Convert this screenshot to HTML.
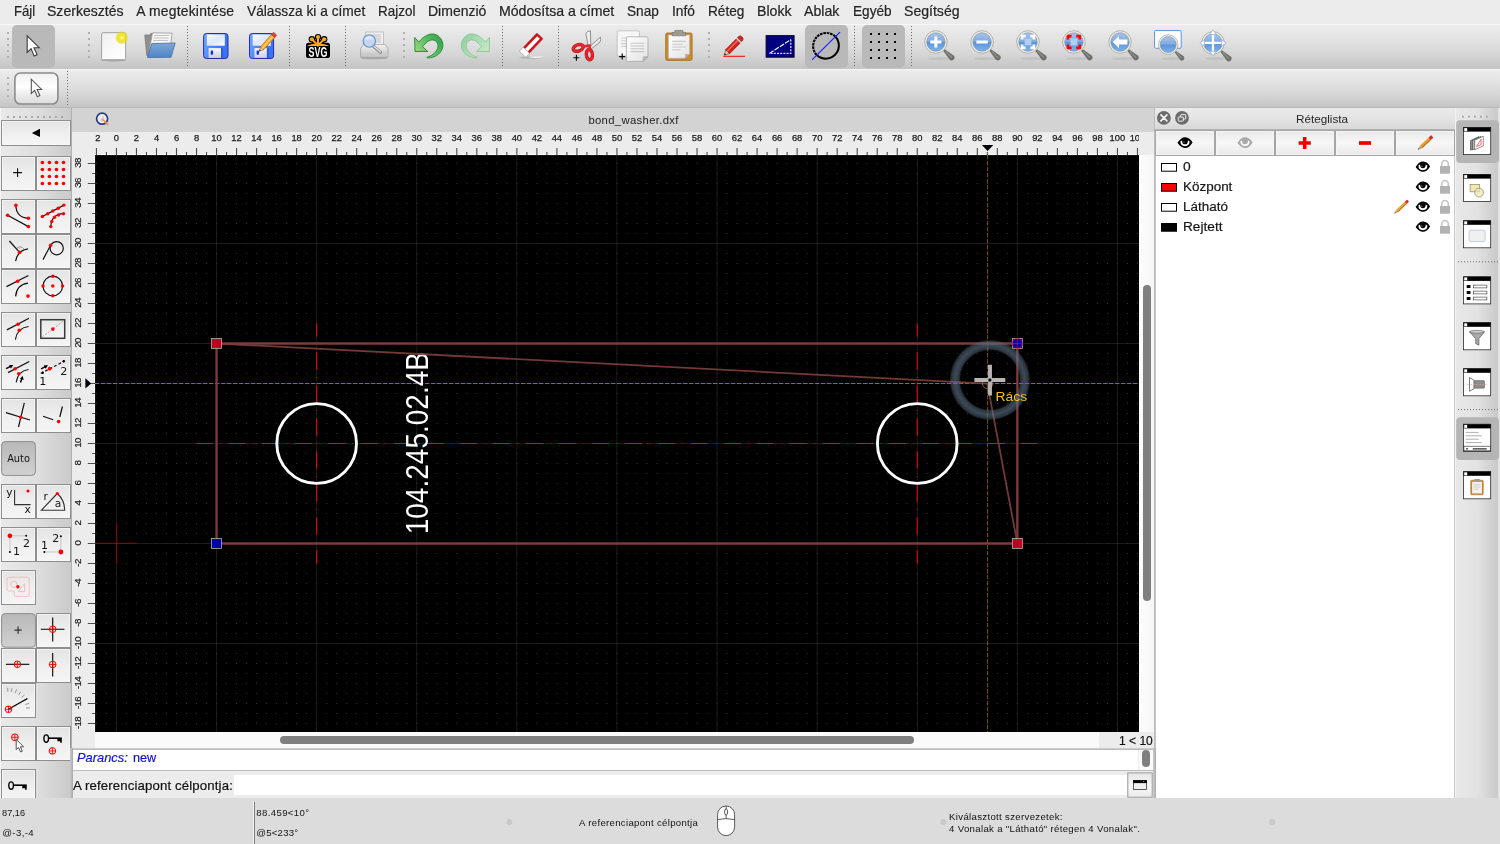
<!DOCTYPE html>
<html lang="hu"><head><meta charset="utf-8"><title>bond_washer.dxf</title>
<style>
*{box-sizing:border-box;margin:0;padding:0}
html,body{width:1500px;height:844px;overflow:hidden;background:#ececec;font-family:"Liberation Sans",sans-serif;color:#000}
.abs{position:absolute}
#root{position:relative;width:1500px;height:844px;overflow:hidden;background:#ececec;will-change:transform}
.t{position:absolute;white-space:nowrap;line-height:1;transform-origin:0 50%}
#menubar{left:0;top:0;width:1500px;height:23px;background:#ececec}
#tb1{left:0;top:24px;width:1500px;height:45px;background:linear-gradient(#ececec,#e4e4e4 28%,#d8d8d8 62%,#c4c4c4);border-top:1px solid #f7f7f7}
#tb2{left:0;top:69px;width:1500px;height:38px;background:linear-gradient(#ececec,#e4e4e4 28%,#d8d8d8 62%,#c5c5c5);border-top:1px solid #f7f7f7}
#tbsep{left:0;top:107px;width:1500px;height:1px;background:#b9b9b9}
#leftbox{left:0;top:108px;width:71px;height:690px;background:linear-gradient(90deg,#f5f5f5 0,#f5f5f5 1px,#e9e9e9 1px,#dfdfdf 50%,#cacaca)}
#rightbar{left:1455px;top:108px;width:45px;height:690px;background:linear-gradient(90deg,#f2f2f2 0,#f2f2f2 1px,#e8e8e8 1px,#e2e2e2 50%,#c8c8c8 43.5px,#e4e4e4 43.5px)}
#status{left:0;top:798px;width:1500px;height:46px;background:#dcdcdc}
.lb{position:absolute;width:34px;height:34px;background:linear-gradient(#fdfdfd,#f1f1f1 50%,#e6e6e6);border:1px solid #b4b4b4;border-top-color:#c6c6c6;border-left-color:#c0c0c0}
.lb.on{background:#c4c4c4;border:1px solid #b0b0b0;border-radius:5px}
.lb svg{position:absolute;left:-1px;top:-1px}
</style></head>
<body><div id="root">
<div class="abs" id="menubar"></div>
<span class="t" style="left:13.80px;top:2.86px;font-size:13.9px;height:16.68px;line-height:16.68px;color:#242424;-webkit-text-stroke:0.2px;transform:scaleX(0.9465);">Fájl</span>
<span class="t" style="left:47.00px;top:2.86px;font-size:13.9px;height:16.68px;line-height:16.68px;color:#242424;-webkit-text-stroke:0.2px;transform:scaleX(1.0118);">Szerkesztés</span>
<span class="t" style="left:136.20px;top:2.86px;font-size:13.9px;height:16.68px;line-height:16.68px;color:#242424;-webkit-text-stroke:0.2px;letter-spacing:0.220px;">A megtekintése</span>
<span class="t" style="left:247.00px;top:2.86px;font-size:13.9px;height:16.68px;line-height:16.68px;color:#242424;-webkit-text-stroke:0.2px;transform:scaleX(0.9880);">Válassza ki a címet</span>
<span class="t" style="left:378.20px;top:2.86px;font-size:13.9px;height:16.68px;line-height:16.68px;color:#242424;-webkit-text-stroke:0.2px;transform:scaleX(0.9682);">Rajzol</span>
<span class="t" style="left:428.20px;top:2.86px;font-size:13.9px;height:16.68px;line-height:16.68px;color:#242424;-webkit-text-stroke:0.2px;transform:scaleX(1.0080);">Dimenzió</span>
<span class="t" style="left:499.20px;top:2.86px;font-size:13.9px;height:16.68px;line-height:16.68px;color:#242424;-webkit-text-stroke:0.2px;transform:scaleX(1.0153);">Módosítsa a címet</span>
<span class="t" style="left:627.20px;top:2.86px;font-size:13.9px;height:16.68px;line-height:16.68px;color:#242424;-webkit-text-stroke:0.2px;transform:scaleX(0.9826);">Snap</span>
<span class="t" style="left:672.30px;top:2.86px;font-size:13.9px;height:16.68px;line-height:16.68px;color:#242424;-webkit-text-stroke:0.2px;transform:scaleX(0.9921);">Infó</span>
<span class="t" style="left:708.00px;top:2.86px;font-size:13.9px;height:16.68px;line-height:16.68px;color:#242424;-webkit-text-stroke:0.2px;transform:scaleX(0.9813);">Réteg</span>
<span class="t" style="left:757.10px;top:2.86px;font-size:13.9px;height:16.68px;line-height:16.68px;color:#242424;-webkit-text-stroke:0.2px;transform:scaleX(1.0179);">Blokk</span>
<span class="t" style="left:804.40px;top:2.86px;font-size:13.9px;height:16.68px;line-height:16.68px;color:#242424;-webkit-text-stroke:0.2px;transform:scaleX(1.0181);">Ablak</span>
<span class="t" style="left:852.50px;top:2.86px;font-size:13.9px;height:16.68px;line-height:16.68px;color:#242424;-webkit-text-stroke:0.2px;transform:scaleX(0.9794);">Egyéb</span>
<span class="t" style="left:904.20px;top:2.86px;font-size:13.9px;height:16.68px;line-height:16.68px;color:#242424;-webkit-text-stroke:0.2px;transform:scaleX(1.0134);">Segítség</span>
<div class="abs" id="tb1"></div><div class="abs" id="tb2"></div><div class="abs" id="tbsep"></div>
<div class="abs" style="left:12px;top:25px;width:43px;height:43px;background:#b9b9b9;border-radius:5px"></div>
<div class="abs" style="left:805px;top:25px;width:43px;height:43px;background:#b9b9b9;border-radius:5px"></div>
<div class="abs" style="left:862px;top:25px;width:43px;height:43px;background:#b9b9b9;border-radius:5px"></div>
<div class="abs" style="left:7px;top:32px;width:2px;height:2px;background:#b1b1b1"></div><div class="abs" style="left:7px;top:38px;width:2px;height:2px;background:#b1b1b1"></div><div class="abs" style="left:7px;top:44px;width:2px;height:2px;background:#b1b1b1"></div><div class="abs" style="left:7px;top:50px;width:2px;height:2px;background:#b1b1b1"></div><div class="abs" style="left:7px;top:56px;width:2px;height:2px;background:#b1b1b1"></div>
<div class="abs" style="left:88px;top:32px;width:2px;height:2px;background:#b1b1b1"></div><div class="abs" style="left:88px;top:38px;width:2px;height:2px;background:#b1b1b1"></div><div class="abs" style="left:88px;top:44px;width:2px;height:2px;background:#b1b1b1"></div><div class="abs" style="left:88px;top:50px;width:2px;height:2px;background:#b1b1b1"></div><div class="abs" style="left:88px;top:56px;width:2px;height:2px;background:#b1b1b1"></div>
<div class="abs" style="left:403px;top:32px;width:2px;height:2px;background:#b1b1b1"></div><div class="abs" style="left:403px;top:38px;width:2px;height:2px;background:#b1b1b1"></div><div class="abs" style="left:403px;top:44px;width:2px;height:2px;background:#b1b1b1"></div><div class="abs" style="left:403px;top:50px;width:2px;height:2px;background:#b1b1b1"></div><div class="abs" style="left:403px;top:56px;width:2px;height:2px;background:#b1b1b1"></div>
<div class="abs" style="left:708px;top:32px;width:2px;height:2px;background:#b1b1b1"></div><div class="abs" style="left:708px;top:38px;width:2px;height:2px;background:#b1b1b1"></div><div class="abs" style="left:708px;top:44px;width:2px;height:2px;background:#b1b1b1"></div><div class="abs" style="left:708px;top:50px;width:2px;height:2px;background:#b1b1b1"></div><div class="abs" style="left:708px;top:56px;width:2px;height:2px;background:#b1b1b1"></div>
<div class="abs" style="left:7px;top:77px;width:2px;height:2px;background:#b1b1b1"></div><div class="abs" style="left:7px;top:83px;width:2px;height:2px;background:#b1b1b1"></div><div class="abs" style="left:7px;top:89px;width:2px;height:2px;background:#b1b1b1"></div><div class="abs" style="left:7px;top:95px;width:2px;height:2px;background:#b1b1b1"></div>
<div class="abs" style="left:187px;top:26px;width:1px;height:40px;background:repeating-linear-gradient(#6a6a6a 0 1px,transparent 1px 3px)"></div>
<div class="abs" style="left:289px;top:26px;width:1px;height:40px;background:repeating-linear-gradient(#6a6a6a 0 1px,transparent 1px 3px)"></div>
<div class="abs" style="left:345px;top:26px;width:1px;height:40px;background:repeating-linear-gradient(#6a6a6a 0 1px,transparent 1px 3px)"></div>
<div class="abs" style="left:502px;top:26px;width:1px;height:40px;background:repeating-linear-gradient(#6a6a6a 0 1px,transparent 1px 3px)"></div>
<div class="abs" style="left:558px;top:26px;width:1px;height:40px;background:repeating-linear-gradient(#6a6a6a 0 1px,transparent 1px 3px)"></div>
<div class="abs" style="left:854px;top:26px;width:1px;height:40px;background:repeating-linear-gradient(#6a6a6a 0 1px,transparent 1px 3px)"></div>
<div class="abs" style="left:911px;top:26px;width:1px;height:40px;background:repeating-linear-gradient(#6a6a6a 0 1px,transparent 1px 3px)"></div>
<div class="abs" style="left:67px;top:71px;width:1px;height:36px;background:repeating-linear-gradient(#6a6a6a 0 1px,transparent 1px 3px)"></div>
<svg class="abs" style="left:10px;top:70px" width="54" height="38" viewBox="10 70 54 38"><defs><linearGradient id="gT2" x1="0" y1="0" x2="0" y2="1"><stop offset="0" stop-color="#f0f0f0"/><stop offset="0.45" stop-color="#ffffff"/><stop offset="0.7" stop-color="#ececec"/><stop offset="1" stop-color="#dcdcdc"/></linearGradient></defs><rect x="14.9" y="73" width="43" height="31" rx="5.5" fill="url(#gT2)" stroke="#8c8c8c" stroke-width="1.6"/></svg>
<svg class="abs" style="left:0;top:23px" width="1500" height="85" viewBox="0 23 1500 85">
<defs>
<linearGradient id="gPaper" x1="0" y1="0" x2="1" y2="1"><stop offset="0" stop-color="#eeeeee"/><stop offset="0.6" stop-color="#fbfbfb"/><stop offset="1" stop-color="#ffffff"/></linearGradient>
<radialGradient id="gGlow"><stop offset="0" stop-color="#ffffc0"/><stop offset="0.35" stop-color="#f2ea20"/><stop offset="0.7" stop-color="#e8dc10" stop-opacity="0.75"/><stop offset="1" stop-color="#e8dc10" stop-opacity="0"/></radialGradient>
<linearGradient id="gFold" x1="0" y1="0" x2="0" y2="1"><stop offset="0" stop-color="#7fa7d8"/><stop offset="1" stop-color="#4f84c4"/></linearGradient>
<linearGradient id="gSave" x1="0" y1="0" x2="1" y2="0.3"><stop offset="0" stop-color="#74acff"/><stop offset="0.5" stop-color="#4a86fa"/><stop offset="1" stop-color="#3a72f2"/></linearGradient><linearGradient id="gShut" x1="0" y1="0" x2="0" y2="1"><stop offset="0" stop-color="#f6f6fa"/><stop offset="1" stop-color="#cfd0dc"/></linearGradient>
<linearGradient id="gLabel" x1="0" y1="0" x2="1" y2="1"><stop offset="0" stop-color="#ffffff"/><stop offset="0.5" stop-color="#dfe6fb"/><stop offset="1" stop-color="#ffffff"/></linearGradient>
<linearGradient id="gUndo" x1="1" y1="0" x2="0" y2="0.6"><stop offset="0" stop-color="#2a9a48"/><stop offset="0.5" stop-color="#5bbb60"/><stop offset="1" stop-color="#93d67c"/></linearGradient>
<linearGradient id="gRedo" x1="1" y1="0" x2="0" y2="0.6"><stop offset="0" stop-color="#90cba0"/><stop offset="0.5" stop-color="#aadcae"/><stop offset="1" stop-color="#c8e9c2"/></linearGradient>
<linearGradient id="gLens" x1="0" y1="0" x2="0" y2="1"><stop offset="0" stop-color="#a9c5ea"/><stop offset="0.48" stop-color="#7fa9e0"/><stop offset="0.52" stop-color="#5a93db"/><stop offset="1" stop-color="#7db4ee"/></linearGradient>
<linearGradient id="gPrn" x1="0" y1="0" x2="0" y2="1"><stop offset="0" stop-color="#f4f4f4"/><stop offset="1" stop-color="#bdbdbd"/></linearGradient>
<linearGradient id="gClip" x1="0" y1="0" x2="1" y2="1"><stop offset="0" stop-color="#ffffff"/><stop offset="1" stop-color="#e2e2e2"/></linearGradient>
</defs>
<path d="M27.20 35.80 L27.20 52.40 L31.10 48.80 L34.20 56.10 L37.10 54.80 L34.00 47.70 L39.20 47.70Z" fill="#fff" stroke="#3d3d3d" stroke-width="1.1" stroke-linejoin="miter"/>
<path d="M31.30 79.20 L31.30 93.48 L34.65 90.38 L37.32 96.66 L39.81 95.54 L37.15 89.43 L41.62 89.43Z" fill="#fff" stroke="#555" stroke-width="1.1" stroke-linejoin="miter"/>
<ellipse cx="113.5" cy="60.2" rx="12.5" ry="1.2" fill="#8a8a8a" opacity="0.6"/>
<rect x="101.6" y="32.7" width="24" height="27" rx="1.2" fill="url(#gPaper)" stroke="#9c9c9c" stroke-width="0.9"/>
<circle cx="121.8" cy="37.8" r="7" fill="url(#gGlow)"/>
<path d="M144.8 35 h5 l1 -1.5 h8 v22 h-12 z" fill="#8f8f8f" stroke="#6f6f6f" stroke-width="0.7"/>
<path d="M152.5 32.8 l19.5 0.3 -1.8 16 -21.5 4 z" fill="#f4f4f4" stroke="#8d8d8d" stroke-width="0.7"/>
<path d="M154 35.5 h15 M153.6 38 h15 M153.2 40.5 h15" stroke="#c4c4c4" stroke-width="1"/>
<path d="M151.8 43.6 l23.4 -0.6 -4.2 14.3 -23.6 0.2 z" fill="url(#gFold)" stroke="#416fa8" stroke-width="0.8"/>
<rect x="203.6" y="33.5" width="24.4" height="25" rx="2.8" fill="url(#gSave)" stroke="#2a2cae" stroke-width="1"/><rect x="206.8" y="34.4" width="18" height="11.3" fill="url(#gLabel)"/><rect x="208.6" y="48.1" width="12.4" height="9.8" fill="url(#gShut)"/><rect x="221.0" y="48.1" width="2" height="9.8" fill="#2c5ce6"/><rect x="210.7" y="50.5" width="2.4" height="4.2" rx="0.6" fill="#1238e0"/>
<rect x="249.5" y="33.5" width="24.1" height="25" rx="2.8" fill="url(#gSave)" stroke="#2a2cae" stroke-width="1"/><rect x="252.7" y="34.4" width="18" height="11.3" fill="url(#gLabel)"/><rect x="254.5" y="48.1" width="12.4" height="9.8" fill="url(#gShut)"/><rect x="266.9" y="48.1" width="2" height="9.8" fill="#2c5ce6"/><rect x="256.6" y="50.5" width="2.4" height="4.2" rx="0.6" fill="#1238e0"/>
<g transform="translate(259.3 51.2) rotate(-47.6) scale(0.967 1.07)"><path d="M0 0 L4.2 -2.1 L4.2 2.1Z" fill="#e8c9a0" stroke="#7a4a20" stroke-width="0.5"/><path d="M0 0 L1.5 -0.75 L1.5 0.75Z" fill="#222"/><rect x="4.2" y="-2.1" width="17" height="4.2" fill="#f6a623" stroke="#b5651d" stroke-width="0.6"/><rect x="4.2" y="-0.7" width="17" height="1.4" fill="#ffd070"/><rect x="21.2" y="-2.1" width="3.2" height="4.2" rx="0.8" fill="#e0452f" stroke="#a52a1a" stroke-width="0.5"/></g>
<rect x="306" y="42.7" width="24" height="15.3" rx="2.6" fill="#000"/>
<g><path d="M318 45.4 L318.00 37.10" stroke="#000" stroke-width="4.20" stroke-linecap="round"/><circle cx="318.00" cy="37.10" r="3.20" fill="#000"/><path d="M318 45.4 L324.15 39.25" stroke="#000" stroke-width="4.20" stroke-linecap="round"/><circle cx="324.15" cy="39.25" r="3.20" fill="#000"/><path d="M318 45.4 L311.85 39.25" stroke="#000" stroke-width="4.20" stroke-linecap="round"/><circle cx="311.85" cy="39.25" r="3.20" fill="#000"/></g>
<g><path d="M318 45.4 L318.00 37.10" stroke="#f9a825" stroke-width="2.00" stroke-linecap="round"/><circle cx="318.00" cy="37.10" r="2.10" fill="#f9a825"/><path d="M318 45.4 L324.15 39.25" stroke="#f9a825" stroke-width="2.00" stroke-linecap="round"/><circle cx="324.15" cy="39.25" r="2.10" fill="#f9a825"/><path d="M318 45.4 L311.85 39.25" stroke="#f9a825" stroke-width="2.00" stroke-linecap="round"/><circle cx="311.85" cy="39.25" r="2.10" fill="#f9a825"/></g>
<path d="M307.6 45.6 Q312 43.6 318 43.6 Q324 43.6 328.4 45.6 L328.4 46.1 H307.6Z" fill="#f9a825"/>
<text x="308.6" y="57.1" font-family="Liberation Sans, sans-serif" font-weight="bold" font-size="14.5" fill="#fff" textLength="18.8" lengthAdjust="spacingAndGlyphs">SVG</text>
<ellipse cx="374" cy="58" rx="13.5" ry="1.3" fill="#8a8a8a" opacity="0.55"/>
<rect x="365.5" y="32" width="18" height="14" fill="#f0f0f0" stroke="#b0b0b0" stroke-width="0.7"/>
<rect x="371" y="34" width="10" height="9" fill="#d8d8d8"/>
<path d="M363.5 44.5 h21.5 l3 4 v8 q0 1.2 -1.2 1.2 h-25 q-1.2 0 -1.2 -1.2 v-8 z" fill="url(#gPrn)" stroke="#9c9c9c" stroke-width="0.7"/>
<rect x="361" y="53.4" width="27" height="2.6" fill="#c9c9c9"/>
<path d="M372.5 45.5 L380.5 52.2" stroke="#8f8f8f" stroke-width="3.2" stroke-linecap="round"/><path d="M373 45.6 L380.4 51.8" stroke="#e6e6e6" stroke-width="1.3" stroke-linecap="round"/>
<circle cx="369.3" cy="41" r="6.2" fill="#c3d6ee" stroke="#5f8fd0" stroke-width="1.1"/><path d="M364.6 39.5 a5 5 0 0 1 9.4 0 z" fill="#e4eefa" opacity="0.8"/>
<path d="M414.6 37.4 L418.7 42.1 C421 39.5 424.5 35.5 430 34.2 C436 32.8 441 37 442.6 42.5 C444 48 441 54 434 56.8 C431.5 57.7 429 58 427.2 57.9 L427.2 57 C431 56.3 435.5 53.5 437.6 48.5 C439 44.5 437 40.5 432.7 39.9 C429 39.6 426 43 422.5 46.6 L427.8 51.5 L415 51.5Z" fill="url(#gUndo)" stroke="#1c8a36" stroke-width="0.9" stroke-linejoin="round"/>
<path transform="translate(904.2 0) scale(-1 1)" d="M414.6 37.4 L418.7 42.1 C421 39.5 424.5 35.5 430 34.2 C436 32.8 441 37 442.6 42.5 C444 48 441 54 434 56.8 C431.5 57.7 429 58 427.2 57.9 L427.2 57 C431 56.3 435.5 53.5 437.6 48.5 C439 44.5 437 40.5 432.7 39.9 C429 39.6 426 43 422.5 46.6 L427.8 51.5 L415 51.5Z" fill="url(#gRedo)" stroke="#88c698" stroke-width="0.9" stroke-linejoin="round"/>
<ellipse cx="531" cy="57.6" rx="12" ry="1.3" fill="#9a9a9a" opacity="0.5"/><ellipse cx="536" cy="57.2" rx="7" ry="0.9" fill="#f4f4f4" opacity="0.9"/>
<g transform="translate(522.6 54.2) rotate(-46.5)"><rect x="0" y="-4.4" width="25.4" height="8.8" rx="1" fill="#d40e14" stroke="#8a8a8a" stroke-width="0.5"/><rect x="5.5" y="-1.9" width="17.6" height="3.8" fill="#ffffff"/><rect x="0" y="-4.4" width="5.5" height="8.8" rx="0.8" fill="#ffffff" stroke="#b8b8b8" stroke-width="0.5"/></g>
<path d="M588.2 46.4 L585.9 33.6 Q586.8 31 590.4 30.8 L590.9 46.8Z" fill="#ececec" stroke="#6a6a6a" stroke-width="0.7"/>
<path d="M590 46.4 L600.4 37.2 Q601.4 40 599.9 42.2 L591 49Z" fill="#ececec" stroke="#6a6a6a" stroke-width="0.7"/>
<g fill="none" stroke="#b41218" stroke-width="3.4"><ellipse cx="578.2" cy="47.9" rx="5.2" ry="3.1" transform="rotate(-20 578.2 47.9)"/><ellipse cx="589.4" cy="54.7" rx="3" ry="5.2" transform="rotate(-6 589.4 54.7)"/></g>
<g fill="none" stroke="#e8242c" stroke-width="2.4"><ellipse cx="578.2" cy="47.9" rx="5.2" ry="3.1" transform="rotate(-20 578.2 47.9)"/><ellipse cx="589.4" cy="54.7" rx="3" ry="5.2" transform="rotate(-6 589.4 54.7)"/><path d="M583.4 46.4 L589.6 45.6 L589.6 49.8" stroke-width="2.8" stroke-linejoin="round"/></g>
<path d="M573.4 57.7 h6 M576.4 54.7 v6" stroke="#000" stroke-width="1.1"/>
<path d="M618.4 30.8 h19.6 q1.4 0 1.4 1.4 v23.8 h-21.6 q-0.6 0 -0.6 -0.6 v-23.4 q0 -1.2 1.2 -1.2z" fill="#f6f6f6" stroke="#b4b4b4" stroke-width="0.7"/>
<path d="M621 38 h14 M621 40.8 h14 M621 43.6 h8 M621 46.4 h6" stroke="#cfcfcf" stroke-width="1.1"/>
<path d="M627.6 36.8 h19.2 q1.2 0 1.2 1.2 v18.6 l-5.2 4.8 h-15.4 q-1 0 -1 -1 v-22.4 q0 -1.2 1.2 -1.2z" fill="url(#gClip)" stroke="#9e9e9e" stroke-width="0.7"/>
<path d="M630.4 43.2 h13.8 M630.4 46 h13.8 M630.4 48.8 h13.8 M630.4 51.6 h13.8" stroke="#c6c6c6" stroke-width="1.1"/>
<path d="M648 56.6 l-5.2 4.8 0.6 -4.6z" fill="#bdbdbd" stroke="#9a9a9a" stroke-width="0.5"/>
<path d="M619.2 56.6 h6 M622.2 53.6 v6" stroke="#000" stroke-width="1.1"/>
<rect x="665.7" y="33.0" width="26.4" height="27.4" rx="1.6" fill="#c98a30" stroke="#a46a1c" stroke-width="0.8"/><path d="M668.5 35.0 h21 v19 l-4.6 4.2 h-16.4 z" fill="url(#gClip)" stroke="#b9b9b9" stroke-width="0.5"/><path d="M689.5 54.0 l-4.6 4.2 0.4 -4.2z" fill="#aeaeae"/><path d="M672.1 41.4 h13.6 M672.1 44.2 h10.6 M672.1 47.0 h13.6 M672.1 49.8 h8.6" stroke="#c8c8c8" stroke-width="1.1"/><path d="M674.9 30.4 h8 v2 h2.8 v3.4 h-13.6 v-3.4 h2.8z" fill="#9c9c90" stroke="#6e6e64" stroke-width="0.6"/>
<g transform="translate(724.2 55.2) rotate(-45.5)"><path d="M0 0 L5 -2.8 L5 2.8Z" fill="#e8c9a0" stroke="#6a3a18" stroke-width="0.6"/><path d="M0 0 L1.9 -1 L1.9 1Z" fill="#222"/><rect x="5" y="-2.8" width="15" height="5.6" fill="#d8211b" stroke="#7e1c10" stroke-width="0.7"/><rect x="5" y="-1.4" width="15" height="1.4" fill="#f46a5a"/><rect x="20" y="-2.8" width="1.8" height="5.6" fill="#c9c9c9"/><path d="M21.8 -2.8 h1.6 q2.2 0 2.2 2.8 q0 2.8 -2.2 2.8 h-1.6z" fill="#e0251d" stroke="#7e1c10" stroke-width="0.6"/></g>
<rect x="723.2" y="55.8" width="21.8" height="1" fill="#ff0000"/>
<rect x="766.1" y="35.6" width="28" height="21.6" fill="#000080" stroke="#0a0a28" stroke-width="1"/>
<path d="M769.4 53.4 L790.8 39.6" stroke="#fff" stroke-width="1.1" stroke-dasharray="5 1.2" fill="none"/><path d="M790.8 39.6 V53.4 H769.4" stroke="#d8d8ec" stroke-width="1.3" stroke-dasharray="2 1.2" fill="none"/>
<path d="M816.74 55.06 A13.1 13.1 0 0 0 835.26 36.54" fill="none" stroke="#000" stroke-width="2"/>
<path d="M835.26 36.54 A13.1 13.1 0 0 0 816.74 55.06" fill="none" stroke="#000" stroke-width="2.1" stroke-dasharray="2.6 0.8"/>
<path d="M812.2 59.6 L840 32.2" stroke="#1020ff" stroke-width="1.1"/>
<rect x="870" y="33" width="2" height="2" fill="#000"/>
<rect x="870" y="41" width="2" height="2" fill="#000"/>
<rect x="870" y="49" width="2" height="2" fill="#000"/>
<rect x="870" y="57" width="2" height="2" fill="#000"/>
<rect x="878" y="33" width="2" height="2" fill="#000"/>
<rect x="878" y="41" width="2" height="2" fill="#000"/>
<rect x="878" y="49" width="2" height="2" fill="#000"/>
<rect x="878" y="57" width="2" height="2" fill="#000"/>
<rect x="886" y="33" width="2" height="2" fill="#000"/>
<rect x="886" y="41" width="2" height="2" fill="#000"/>
<rect x="886" y="49" width="2" height="2" fill="#000"/>
<rect x="886" y="57" width="2" height="2" fill="#000"/>
<rect x="894" y="33" width="2" height="2" fill="#000"/>
<rect x="894" y="41" width="2" height="2" fill="#000"/>
<rect x="894" y="49" width="2" height="2" fill="#000"/>
<rect x="894" y="57" width="2" height="2" fill="#000"/>
<ellipse cx="939.9" cy="58.6" rx="12" ry="1.6" fill="#aaa" opacity="0.35"/>
<g transform="translate(935.9 42.0)"><path d="M7.4 8.9 L8.9 7.3 L17.7 13.5 A2.8 2.8 0 0 1 13.7 17.5Z" fill="#6d6f6a"/><path d="M10 9.6 L15.6 15.2" stroke="#8f918b" stroke-width="1.3" stroke-linecap="round"/><circle r="11.3" fill="#ecece6" stroke="#9a9a94" stroke-width="0.7"/><circle r="9.2" fill="url(#gLens)" stroke="#7a8aa0" stroke-width="0.6"/></g>
<ellipse cx="986.1" cy="58.6" rx="12" ry="1.6" fill="#aaa" opacity="0.35"/>
<g transform="translate(982.1 42.0)"><path d="M7.4 8.9 L8.9 7.3 L17.7 13.5 A2.8 2.8 0 0 1 13.7 17.5Z" fill="#6d6f6a"/><path d="M10 9.6 L15.6 15.2" stroke="#8f918b" stroke-width="1.3" stroke-linecap="round"/><circle r="11.3" fill="#ecece6" stroke="#9a9a94" stroke-width="0.7"/><circle r="9.2" fill="url(#gLens)" stroke="#7a8aa0" stroke-width="0.6"/></g>
<ellipse cx="1032.0" cy="58.6" rx="12" ry="1.6" fill="#aaa" opacity="0.35"/>
<g transform="translate(1028.0 42.0)"><path d="M7.4 8.9 L8.9 7.3 L17.7 13.5 A2.8 2.8 0 0 1 13.7 17.5Z" fill="#6d6f6a"/><path d="M10 9.6 L15.6 15.2" stroke="#8f918b" stroke-width="1.3" stroke-linecap="round"/><circle r="11.3" fill="#ecece6" stroke="#9a9a94" stroke-width="0.7"/><circle r="9.2" fill="url(#gLens)" stroke="#7a8aa0" stroke-width="0.6"/></g>
<ellipse cx="1077.9" cy="58.6" rx="12" ry="1.6" fill="#aaa" opacity="0.35"/>
<g transform="translate(1073.9 42.0)"><path d="M7.4 8.9 L8.9 7.3 L17.7 13.5 A2.8 2.8 0 0 1 13.7 17.5Z" fill="#6d6f6a"/><path d="M10 9.6 L15.6 15.2" stroke="#8f918b" stroke-width="1.3" stroke-linecap="round"/><circle r="11.3" fill="#ecece6" stroke="#9a9a94" stroke-width="0.7"/><circle r="9.2" fill="url(#gLens)" stroke="#7a8aa0" stroke-width="0.6"/></g>
<ellipse cx="1124.1" cy="58.6" rx="12" ry="1.6" fill="#aaa" opacity="0.35"/>
<g transform="translate(1120.1 42.0)"><path d="M7.4 8.9 L8.9 7.3 L17.7 13.5 A2.8 2.8 0 0 1 13.7 17.5Z" fill="#6d6f6a"/><path d="M10 9.6 L15.6 15.2" stroke="#8f918b" stroke-width="1.3" stroke-linecap="round"/><circle r="11.3" fill="#ecece6" stroke="#9a9a94" stroke-width="0.7"/><circle r="9.2" fill="url(#gLens)" stroke="#7a8aa0" stroke-width="0.6"/></g>
<path d="M930.4 42 h11 M935.9 36.5 v11" stroke="#fff" stroke-width="3"/>
<path d="M976.4 42 h11.4" stroke="#fff" stroke-width="3"/>
<rect x="1024.6" y="38.6" width="6.8" height="6.8" fill="#b4cdf0"/><path d="M1022.1 39.6 V36.1 H1025.6 M1022.1 44.4 V47.9 H1025.6 M1033.9 39.6 V36.1 H1030.4 M1033.9 44.4 V47.9 H1030.4 " fill="none" stroke="#fff" stroke-width="2.6"/>
<rect x="1070.5" y="38.6" width="6.8" height="6.8" fill="#b4cdf0"/><path d="M1068.0 39.6 V36.1 H1071.5 M1068.0 44.4 V47.9 H1071.5 M1079.8 39.6 V36.1 H1076.3 M1079.8 44.4 V47.9 H1076.3 " fill="none" stroke="#ff0000" stroke-width="2.6"/>
<path d="M1112.6 42 L1119 36 V39.4 H1127.4 V44.6 H1119 V48Z" fill="#fff"/>
<rect x="1154.6" y="30.6" width="26.6" height="17.6" rx="1" fill="#fff" stroke="#5f8fd8" stroke-width="1"/>
<ellipse cx="1172" cy="58.6" rx="11" ry="1.6" fill="#aaa" opacity="0.35"/>
<g transform="translate(1168.2 44.6) scale(0.87)"><path d="M7.4 8.9 L8.9 7.3 L17.7 13.5 A2.8 2.8 0 0 1 13.7 17.5Z" fill="#6d6f6a"/><path d="M10 9.6 L15.6 15.2" stroke="#8f918b" stroke-width="1.3" stroke-linecap="round"/><circle r="11.3" fill="#ecece6" stroke="#9a9a94" stroke-width="0.7"/><circle r="9.2" fill="url(#gLens)" stroke="#7a8aa0" stroke-width="0.6"/></g>
<ellipse cx="1217" cy="58.6" rx="12" ry="1.6" fill="#aaa" opacity="0.35"/>
<g transform="translate(1213.0 42.9)"><path d="M7.4 8.9 L8.9 7.3 L17.7 13.5 A2.8 2.8 0 0 1 13.7 17.5Z" fill="#6d6f6a"/><path d="M10 9.6 L15.6 15.2" stroke="#8f918b" stroke-width="1.3" stroke-linecap="round"/><circle r="11.3" fill="#ecece6" stroke="#9a9a94" stroke-width="0.7"/><circle r="9.2" fill="url(#gLens)" stroke="#7a8aa0" stroke-width="0.6"/></g>
<g transform="rotate(0 1213 42.9)"><path d="M1213 42.9 V33.2" stroke="#fff" stroke-width="2.3"/><path d="M1213 29.8 L1216.3 34.5 H1209.7Z" fill="#fff" stroke="#5f8fd8" stroke-width="0.5"/></g><g transform="rotate(90 1213 42.9)"><path d="M1213 42.9 V33.2" stroke="#fff" stroke-width="2.3"/><path d="M1213 29.8 L1216.3 34.5 H1209.7Z" fill="#fff" stroke="#5f8fd8" stroke-width="0.5"/></g><g transform="rotate(180 1213 42.9)"><path d="M1213 42.9 V33.2" stroke="#fff" stroke-width="2.3"/><path d="M1213 29.8 L1216.3 34.5 H1209.7Z" fill="#fff" stroke="#5f8fd8" stroke-width="0.5"/></g><g transform="rotate(270 1213 42.9)"><path d="M1213 42.9 V33.2" stroke="#fff" stroke-width="2.3"/><path d="M1213 29.8 L1216.3 34.5 H1209.7Z" fill="#fff" stroke="#5f8fd8" stroke-width="0.5"/></g>
</svg>
<div class="abs" id="leftbox"></div>
<div class="abs" style="left:70.8px;top:108px;width:1px;height:690px;background:#b0b0b0"></div>
<div class="abs" style="left:7px;top:116px;width:2px;height:2px;background:#a9a9a9"></div>
<div class="abs" style="left:13.03px;top:116px;width:2px;height:2px;background:#a9a9a9"></div>
<div class="abs" style="left:19.06px;top:116px;width:2px;height:2px;background:#a9a9a9"></div>
<div class="abs" style="left:25.09px;top:116px;width:2px;height:2px;background:#a9a9a9"></div>
<div class="abs" style="left:31.12px;top:116px;width:2px;height:2px;background:#a9a9a9"></div>
<div class="abs" style="left:37.15px;top:116px;width:2px;height:2px;background:#a9a9a9"></div>
<div class="abs" style="left:43.18px;top:116px;width:2px;height:2px;background:#a9a9a9"></div>
<div class="abs" style="left:49.21px;top:116px;width:2px;height:2px;background:#a9a9a9"></div>
<div class="abs" style="left:55.24px;top:116px;width:2px;height:2px;background:#a9a9a9"></div>
<div class="abs" style="left:61.27px;top:116px;width:2px;height:2px;background:#a9a9a9"></div>
<svg class="abs" style="left:0;top:108px" width="72" height="690" viewBox="0 108 72 690"><defs><linearGradient id="gBtn" x1="0" y1="0" x2="0" y2="1"><stop offset="0" stop-color="#e3e3e3"/><stop offset="0.5" stop-color="#efefef"/><stop offset="1" stop-color="#f5f5f5"/></linearGradient><linearGradient id="gOn" x1="0" y1="0" x2="0" y2="1"><stop offset="0" stop-color="#b8b8b8"/><stop offset="1" stop-color="#d1d1d1"/></linearGradient></defs><rect x="1.5" y="120.5" width="69" height="25" fill="url(#gBtn)" stroke="#8e8e8e" stroke-width="1"/><rect x="2.5" y="121.5" width="67" height="23" stroke="#f8f8f8" stroke-opacity="0.75" stroke-width="1" fill="none"/><rect x="1.5" y="156.5" width="34" height="34" fill="url(#gBtn)" stroke="#8e8e8e" stroke-width="1"/><rect x="2.5" y="157.5" width="32" height="32" stroke="#f8f8f8" stroke-opacity="0.75" stroke-width="1" fill="none"/><rect x="36.5" y="156.5" width="34" height="34" fill="url(#gBtn)" stroke="#8e8e8e" stroke-width="1"/><rect x="37.5" y="157.5" width="32" height="32" stroke="#f8f8f8" stroke-opacity="0.75" stroke-width="1" fill="none"/><rect x="1.5" y="199.5" width="34" height="34" fill="url(#gBtn)" stroke="#8e8e8e" stroke-width="1"/><rect x="2.5" y="200.5" width="32" height="32" stroke="#f8f8f8" stroke-opacity="0.75" stroke-width="1" fill="none"/><rect x="36.5" y="199.5" width="34" height="34" fill="url(#gBtn)" stroke="#8e8e8e" stroke-width="1"/><rect x="37.5" y="200.5" width="32" height="32" stroke="#f8f8f8" stroke-opacity="0.75" stroke-width="1" fill="none"/><rect x="1.5" y="234.5" width="34" height="34" fill="url(#gBtn)" stroke="#8e8e8e" stroke-width="1"/><rect x="2.5" y="235.5" width="32" height="32" stroke="#f8f8f8" stroke-opacity="0.75" stroke-width="1" fill="none"/><rect x="36.5" y="234.5" width="34" height="34" fill="url(#gBtn)" stroke="#8e8e8e" stroke-width="1"/><rect x="37.5" y="235.5" width="32" height="32" stroke="#f8f8f8" stroke-opacity="0.75" stroke-width="1" fill="none"/><rect x="1.5" y="269.5" width="34" height="34" fill="url(#gBtn)" stroke="#8e8e8e" stroke-width="1"/><rect x="2.5" y="270.5" width="32" height="32" stroke="#f8f8f8" stroke-opacity="0.75" stroke-width="1" fill="none"/><rect x="36.5" y="269.5" width="34" height="34" fill="url(#gBtn)" stroke="#8e8e8e" stroke-width="1"/><rect x="37.5" y="270.5" width="32" height="32" stroke="#f8f8f8" stroke-opacity="0.75" stroke-width="1" fill="none"/><rect x="1.5" y="312.5" width="34" height="34" fill="url(#gBtn)" stroke="#8e8e8e" stroke-width="1"/><rect x="2.5" y="313.5" width="32" height="32" stroke="#f8f8f8" stroke-opacity="0.75" stroke-width="1" fill="none"/><rect x="36.5" y="312.5" width="34" height="34" fill="url(#gBtn)" stroke="#8e8e8e" stroke-width="1"/><rect x="37.5" y="313.5" width="32" height="32" stroke="#f8f8f8" stroke-opacity="0.75" stroke-width="1" fill="none"/><rect x="1.5" y="355.5" width="34" height="34" fill="url(#gBtn)" stroke="#8e8e8e" stroke-width="1"/><rect x="2.5" y="356.5" width="32" height="32" stroke="#f8f8f8" stroke-opacity="0.75" stroke-width="1" fill="none"/><rect x="36.5" y="355.5" width="34" height="34" fill="url(#gBtn)" stroke="#8e8e8e" stroke-width="1"/><rect x="37.5" y="356.5" width="32" height="32" stroke="#f8f8f8" stroke-opacity="0.75" stroke-width="1" fill="none"/><rect x="1.5" y="398.5" width="34" height="34" fill="url(#gBtn)" stroke="#8e8e8e" stroke-width="1"/><rect x="2.5" y="399.5" width="32" height="32" stroke="#f8f8f8" stroke-opacity="0.75" stroke-width="1" fill="none"/><rect x="36.5" y="398.5" width="34" height="34" fill="url(#gBtn)" stroke="#8e8e8e" stroke-width="1"/><rect x="37.5" y="399.5" width="32" height="32" stroke="#f8f8f8" stroke-opacity="0.75" stroke-width="1" fill="none"/><rect x="1.5" y="484.5" width="34" height="34" fill="url(#gBtn)" stroke="#8e8e8e" stroke-width="1"/><rect x="2.5" y="485.5" width="32" height="32" stroke="#f8f8f8" stroke-opacity="0.75" stroke-width="1" fill="none"/><rect x="36.5" y="484.5" width="34" height="34" fill="url(#gBtn)" stroke="#8e8e8e" stroke-width="1"/><rect x="37.5" y="485.5" width="32" height="32" stroke="#f8f8f8" stroke-opacity="0.75" stroke-width="1" fill="none"/><rect x="1.5" y="527.5" width="34" height="34" fill="url(#gBtn)" stroke="#8e8e8e" stroke-width="1"/><rect x="2.5" y="528.5" width="32" height="32" stroke="#f8f8f8" stroke-opacity="0.75" stroke-width="1" fill="none"/><rect x="36.5" y="527.5" width="34" height="34" fill="url(#gBtn)" stroke="#8e8e8e" stroke-width="1"/><rect x="37.5" y="528.5" width="32" height="32" stroke="#f8f8f8" stroke-opacity="0.75" stroke-width="1" fill="none"/><rect x="1.5" y="648.5" width="34" height="34" fill="url(#gBtn)" stroke="#8e8e8e" stroke-width="1"/><rect x="2.5" y="649.5" width="32" height="32" stroke="#f8f8f8" stroke-opacity="0.75" stroke-width="1" fill="none"/><rect x="36.5" y="648.5" width="34" height="34" fill="url(#gBtn)" stroke="#8e8e8e" stroke-width="1"/><rect x="37.5" y="649.5" width="32" height="32" stroke="#f8f8f8" stroke-opacity="0.75" stroke-width="1" fill="none"/><rect x="1.5" y="726.5" width="34" height="34" fill="url(#gBtn)" stroke="#8e8e8e" stroke-width="1"/><rect x="2.5" y="727.5" width="32" height="32" stroke="#f8f8f8" stroke-opacity="0.75" stroke-width="1" fill="none"/><rect x="36.5" y="726.5" width="34" height="34" fill="url(#gBtn)" stroke="#8e8e8e" stroke-width="1"/><rect x="37.5" y="727.5" width="32" height="32" stroke="#f8f8f8" stroke-opacity="0.75" stroke-width="1" fill="none"/><rect x="1.5" y="570.5" width="34" height="34" fill="url(#gBtn)" stroke="#8e8e8e" stroke-width="1"/><rect x="2.5" y="571.5" width="32" height="32" stroke="#f8f8f8" stroke-opacity="0.75" stroke-width="1" fill="none"/><rect x="1.5" y="683.5" width="34" height="34" fill="url(#gBtn)" stroke="#8e8e8e" stroke-width="1"/><rect x="2.5" y="684.5" width="32" height="32" stroke="#f8f8f8" stroke-opacity="0.75" stroke-width="1" fill="none"/><rect x="1.5" y="769.5" width="34" height="34" fill="url(#gBtn)" stroke="#8e8e8e" stroke-width="1"/><rect x="2.5" y="770.5" width="32" height="32" stroke="#f8f8f8" stroke-opacity="0.75" stroke-width="1" fill="none"/><rect x="36.5" y="613.5" width="34" height="34" fill="url(#gBtn)" stroke="#8e8e8e" stroke-width="1"/><rect x="37.5" y="614.5" width="32" height="32" stroke="#f8f8f8" stroke-opacity="0.75" stroke-width="1" fill="none"/><rect x="1.6" y="441.6" width="33.8" height="33.8" rx="3.6" fill="url(#gOn)" stroke="#8e8e8e" stroke-width="1"/><rect x="1.6" y="613.6" width="33.8" height="33.6" rx="3.6" fill="url(#gOn)" stroke="#8e8e8e" stroke-width="1"/><path d="M31.8 132.9 L40 128.7 V137.1Z" fill="#000"/><path d="M13.2 172.6 H22 M17.6 168.2 V177" stroke="#111" stroke-width="1.1" fill="none" /><circle cx="42.4" cy="162.5" r="1.8" fill="#ff0000"/><circle cx="42.4" cy="169.5" r="1.8" fill="#ff0000"/><circle cx="42.4" cy="176.5" r="1.8" fill="#ff0000"/><circle cx="42.4" cy="183.5" r="1.8" fill="#ff0000"/><circle cx="49.4" cy="162.5" r="1.8" fill="#ff0000"/><circle cx="49.4" cy="169.5" r="1.8" fill="#ff0000"/><circle cx="49.4" cy="176.5" r="1.8" fill="#ff0000"/><circle cx="49.4" cy="183.5" r="1.8" fill="#ff0000"/><circle cx="56.5" cy="162.5" r="1.8" fill="#ff0000"/><circle cx="56.5" cy="169.5" r="1.8" fill="#ff0000"/><circle cx="56.5" cy="176.5" r="1.8" fill="#ff0000"/><circle cx="56.5" cy="183.5" r="1.8" fill="#ff0000"/><circle cx="63.5" cy="162.5" r="1.8" fill="#ff0000"/><circle cx="63.5" cy="169.5" r="1.8" fill="#ff0000"/><circle cx="63.5" cy="176.5" r="1.8" fill="#ff0000"/><circle cx="63.5" cy="183.5" r="1.8" fill="#ff0000"/><path d="M7.6 215.3 L28.4 226.6" stroke="#111" stroke-width="1.2" fill="none"/><path d="M15.9 205.4 Q16.2 217.4 28.4 218.2" stroke="#111" stroke-width="1.2" fill="none" /><circle cx="7.6" cy="215.3" r="1.8" fill="#ff0000"/><circle cx="15.9" cy="205.4" r="1.8" fill="#ff0000"/><circle cx="28.4" cy="218.2" r="1.8" fill="#ff0000"/><circle cx="28.4" cy="226.6" r="1.8" fill="#ff0000"/><path d="M42.4 216.5 L63.9 205.1" stroke="#111" stroke-width="1.2" fill="none"/><path d="M50.8 226.6 Q51.4 214.2 63.5 213.7" stroke="#111" stroke-width="1.2" fill="none" /><circle cx="42.4" cy="216.5" r="1.7" fill="#ff0000"/><circle cx="47.7" cy="213.7" r="1.7" fill="#ff0000"/><circle cx="52.8" cy="211.0" r="1.7" fill="#ff0000"/><circle cx="58.3" cy="208.3" r="1.7" fill="#ff0000"/><circle cx="63.9" cy="205.1" r="1.7" fill="#ff0000"/><circle cx="50.8" cy="226.6" r="1.7" fill="#ff0000"/><circle cx="51.8" cy="221.4" r="1.7" fill="#ff0000"/><circle cx="54.5" cy="217.3" r="1.7" fill="#ff0000"/><circle cx="58.5" cy="215.0" r="1.7" fill="#ff0000"/><circle cx="63.5" cy="213.7" r="1.7" fill="#ff0000"/><path d="M9.4 241.0 L19.6 252.3" stroke="#111" stroke-width="1.2" fill="none"/><path d="M15.6 261.2 Q17.4 250.4 28 248.8" stroke="#111" stroke-width="1.2" fill="none" /><path d="M16.6 248.6 Q20.4 244.6 24.2 249.4" stroke="#333" stroke-width="0.5" fill="none" /><circle cx="19.6" cy="248.6" r="0.4" fill="#333"/><circle cx="19.5" cy="252.4" r="1.8" fill="#ff0000"/><circle cx="56.7" cy="248.2" r="6.6" fill="none" stroke="#111" stroke-width="1.2"/><path d="M50.6 245.3 L43.0 259.6" stroke="#111" stroke-width="1.2" fill="none"/><circle cx="50.6" cy="245.3" r="1.8" fill="#ff0000"/><path d="M6.5 286.6 L28.4 275.5" stroke="#111" stroke-width="1.2" fill="none"/><path d="M15.6 296.4 Q16.6 284.6 28 283.1" stroke="#111" stroke-width="1.2" fill="none" /><circle cx="17.6" cy="281.3" r="1.8" fill="#ff0000"/><circle cx="28.0" cy="296.1" r="1.8" fill="#ff0000"/><circle cx="52.8" cy="286" r="9.8" fill="none" stroke="#111" stroke-width="1.2"/><circle cx="52.8" cy="286.0" r="1.7" fill="#ff0000"/><circle cx="52.8" cy="276.2" r="1.7" fill="#ff0000"/><circle cx="52.8" cy="295.8" r="1.7" fill="#ff0000"/><circle cx="43.0" cy="286.0" r="1.7" fill="#ff0000"/><circle cx="62.6" cy="286.0" r="1.7" fill="#ff0000"/><path d="M6.9 329.9 L29.0 318.3" stroke="#111" stroke-width="1.2" fill="none"/><path d="M15.4 339.6 Q17 328 28.5 326.5" stroke="#111" stroke-width="1.2" fill="none" /><circle cx="18.0" cy="324.2" r="1.8" fill="#ff0000"/><circle cx="19.3" cy="330.3" r="1.8" fill="#ff0000"/><rect x="40.8" y="319.7" width="23.9" height="18.6" fill="none" stroke="#3a3a3a" stroke-width="1.5"/><path d="M42.4 336.8 L63.2 321.2" stroke="#777" stroke-width="0.6" fill="none" stroke-dasharray="2 1.4"/><circle cx="52.9" cy="329.1" r="1.8" fill="#ff0000"/><path d="M8.0 372.6 L29.3 361.5" stroke="#111" stroke-width="1.2" fill="none"/><path d="M16.2 382.3 Q17.8 371 28.5 369.5" stroke="#111" stroke-width="1.2" fill="none" /><circle cx="15.1" cy="368.7" r="1.8" fill="#ff0000"/><circle cx="18.8" cy="373.8" r="1.8" fill="#ff0000"/><path d="M6.1 368.7 L10.6 366.4" stroke="#000" stroke-width="1.5" fill="none" /><path d="M13.3 365 L9.1 365 L10.9 368.4Z" fill="#000"/><path d="M20.5 382.5 L21.8 378.8" stroke="#000" stroke-width="1.5" fill="none" /><path d="M22.8 375.9 L19.9 378.6 L23.6 379.9Z" fill="#000"/><path d="M40.8 373.5 L64.8 360.9" stroke="#111" stroke-width="1.3" fill="none" stroke-dasharray="2.8 2.2"/><circle cx="49.6" cy="368.7" r="1.9" fill="#ff0000"/><circle cx="42.7" cy="372.7" r="1.2" fill="#000"/><circle cx="63.7" cy="361.2" r="1.2" fill="#000"/><path d="M41.1 368.9 L45.4 366.7" stroke="#000" stroke-width="1.5" fill="none" /><path d="M48 365.3 L43.8 365.3 L45.6 368.7Z" fill="#000"/><text x="42.8" y="384.7" font-family="DejaVu Sans, sans-serif" font-size="11.2" fill="#111" text-anchor="middle">1</text><text x="63.7" y="374.8" font-family="DejaVu Sans, sans-serif" font-size="11.2" fill="#111" text-anchor="middle">2</text><path d="M5.9 412.6 L30.0 420.0" stroke="#111" stroke-width="1.2" fill="none"/><path d="M24.3 402.8 L18.5 427.0" stroke="#111" stroke-width="1.2" fill="none"/><circle cx="20.8" cy="417.2" r="1.8" fill="#ff0000"/><path d="M43.1 416.3 L53.2 419.7" stroke="#111" stroke-width="1.2" fill="none"/><path d="M62.4 406.5 L59.8 417.0" stroke="#111" stroke-width="1.2" fill="none"/><circle cx="58.6" cy="421.6" r="1.8" fill="#ff0000"/><text x="18.55" y="461.9" font-family="DejaVu Sans, sans-serif" font-size="9.6" fill="#111" text-anchor="middle" textLength="22.8" lengthAdjust="spacingAndGlyphs">Auto</text><path d="M14.6 490 V504.6 H30.6" stroke="#333" stroke-width="1.1" fill="none" /><circle cx="28.0" cy="491.0" r="1.6" fill="#ff0000"/><text x="9.3" y="495.8" font-family="DejaVu Sans, sans-serif" font-size="10.6" fill="#111" text-anchor="middle">y</text><text x="27.6" y="513.4" font-family="DejaVu Sans, sans-serif" font-size="10.6" fill="#111" text-anchor="middle">x</text><path d="M57.3 493.5 L41.3 510.3 H64.7 Q64.6 500 57.3 493.5" stroke="#333" stroke-width="1.1" fill="none" /><circle cx="57.3" cy="493.5" r="1.6" fill="#ff0000"/><text x="45.6" y="500.0" font-family="DejaVu Sans, sans-serif" font-size="10.6" fill="#111" text-anchor="middle">r</text><text x="57.9" y="507.4" font-family="DejaVu Sans, sans-serif" font-size="10.6" fill="#111" text-anchor="middle">a</text><path d="M9.9 551.9 V535.8 H26.2" stroke="#aaa" stroke-width="0.6" fill="none" /><circle cx="9.9" cy="535.8" r="2.4" fill="#ff0000"/><circle cx="26.2" cy="535.8" r="1.0" fill="#000"/><circle cx="9.9" cy="551.9" r="1.0" fill="#000"/><text x="26.6" y="546.8" font-family="DejaVu Sans, sans-serif" font-size="11" fill="#111" text-anchor="middle">2</text><text x="16.4" y="555.2" font-family="DejaVu Sans, sans-serif" font-size="11" fill="#111" text-anchor="middle">1</text><path d="M44.4 552 H60.9 V536.2" stroke="#aaa" stroke-width="0.6" fill="none" /><circle cx="60.9" cy="552.0" r="2.4" fill="#ff0000"/><circle cx="60.9" cy="536.2" r="1.0" fill="#000"/><circle cx="44.4" cy="552.0" r="1.0" fill="#000"/><text x="55.8" y="541.8" font-family="DejaVu Sans, sans-serif" font-size="11" fill="#111" text-anchor="middle">2</text><text x="44.6" y="549.2" font-family="DejaVu Sans, sans-serif" font-size="11" fill="#111" text-anchor="middle">1</text><path d="M9.4 577.2 H27.6 Q29.2 577.2 29.2 578.8 V594.8 Q29.2 596.4 27.6 596.4 H15.6 Q14.2 596.4 14.2 595 V591 H8.6 Q7 591 7 589.4 V579.6 Q7 577.2 9.4 577.2Z" stroke="#f2a6a6" stroke-width="0.6" fill="none" /><circle cx="13.9" cy="584.4" r="3.2" fill="none" stroke="#f2a6a6" stroke-width="0.7"/><path d="M18.2 591.6 H24.6 V583.6Z" stroke="#f2a6a6" stroke-width="0.7" fill="none" /><circle cx="17.9" cy="586.8" r="1.7" fill="#ff0000"/><path d="M14.5 630.2 H21.7 M18.1 626.6 V633.8" stroke="#333" stroke-width="1.2" fill="none" /><path d="M40.8 629.2 H64.4 M52.7 617.6 V641.5" stroke="#000" stroke-width="1.1" fill="none" /><circle cx="52.7" cy="629.2" r="3.3" fill="none" stroke="#ff0000" stroke-width="1"/><path d="M49.4 629.2 H56.0 M52.7 625.9 V632.5" stroke="#ff0000" stroke-width="0.9"/><path d="M5.9 664.3 H29.3" stroke="#000" stroke-width="1.1" fill="none" /><circle cx="17.4" cy="664.3" r="3.3" fill="none" stroke="#ff0000" stroke-width="1"/><path d="M14.1 664.3 H20.7 M17.4 661.0 V667.6" stroke="#ff0000" stroke-width="0.9"/><path d="M52.7 653 V676.6" stroke="#000" stroke-width="1.1" fill="none" /><circle cx="52.7" cy="664.5" r="3.3" fill="none" stroke="#ff0000" stroke-width="1"/><path d="M49.4 664.5 H56.0 M52.7 661.2 V667.8" stroke="#ff0000" stroke-width="0.9"/><path d="M26.0 708.1 L29.9 707.8" stroke="#8c8c8c" stroke-width="0.9" fill="none"/><path d="M25.3 704.5 L29.2 703.4" stroke="#8c8c8c" stroke-width="0.9" fill="none"/><path d="M23.8 700.8 L27.3 698.9" stroke="#8c8c8c" stroke-width="0.9" fill="none"/><path d="M21.5 697.6 L24.5 694.9" stroke="#8c8c8c" stroke-width="0.9" fill="none"/><path d="M18.5 695.0 L20.8 691.7" stroke="#8c8c8c" stroke-width="0.9" fill="none"/><path d="M15.1 693.1 L16.6 689.4" stroke="#8c8c8c" stroke-width="0.9" fill="none"/><path d="M11.2 692.0 L11.9 688.1" stroke="#8c8c8c" stroke-width="0.9" fill="none"/><path d="M7.9 691.8 L7.7 687.8" stroke="#8c8c8c" stroke-width="0.9" fill="none"/><path d="M8.5 709.3 L27.4 698.5" stroke="#000" stroke-width="1.3" fill="none"/><circle cx="8.5" cy="709.3" r="3.3" fill="none" stroke="#ff0000" stroke-width="1"/><path d="M5.2 709.3 H11.8 M8.5 706.0 V712.6" stroke="#ff0000" stroke-width="0.9"/><circle cx="14.9" cy="737.3" r="3.4" fill="none" stroke="#ff0000" stroke-width="1"/><path d="M11.5 737.3 H18.3 M14.9 733.9 V740.7" stroke="#ff0000" stroke-width="0.9"/><path d="M16.20 739.40 L16.20 749.69 L18.62 747.46 L20.54 751.99 L22.34 751.18 L20.42 746.78 L23.64 746.78Z" fill="#fff" stroke="#555" stroke-width="1"/><ellipse cx="46.2" cy="738.6" rx="2.3" ry="3.7" fill="none" stroke="#000" stroke-width="1.4"/><path d="M48.8 738.2 H61.8" stroke="#000" stroke-width="1.6"/><path d="M57.4 738.2 h4.4 v4.6 h-1.6 v-1.6 h-2.8z" fill="#000"/><circle cx="52.4" cy="750.9" r="3.3" fill="none" stroke="#ff0000" stroke-width="1"/><path d="M49.1 750.9 H55.7 M52.4 747.6 V754.2" stroke="#ff0000" stroke-width="0.9"/><ellipse cx="11.1" cy="785.6" rx="2.3" ry="3.7" fill="none" stroke="#000" stroke-width="1.4"/><path d="M13.7 785.2 H26.7" stroke="#000" stroke-width="1.6"/><path d="M22.3 785.2 h4.4 v4.6 h-1.6 v-1.6 h-2.8z" fill="#000"/></svg>
<div class="abs" style="left:71.8px;top:108px;width:1082.2px;height:24px;background:#d3d3d3"></div>
<div class="abs" style="left:71.8px;top:131.6px;width:1082.2px;height:24px;background:#ececec"></div>
<div class="abs" style="left:71.8px;top:155px;width:23.2px;height:577px;background:#ececec"></div>
<div class="abs" style="left:72.6px;top:732px;width:1081.4px;height:17px;background:#fafafa"></div>
<div class="abs" style="left:71.8px;top:732px;width:23.2px;height:17px;background:#ececec"></div>
<div class="abs" style="left:1139px;top:155px;width:15px;height:577px;background:linear-gradient(90deg,#fdfdfd,#f6f6f6)"></div>
<div class="abs" style="left:1153.8px;top:108px;width:1.4px;height:690px;background:#bdbdbd"></div>
<span class="t" style="left:588.40px;top:113.92px;font-size:11.3px;height:13.56px;line-height:13.56px;color:#1c1c1c;letter-spacing:0.333px;">bond_washer.dxf</span>
<div class="abs" style="left:1143px;top:285px;width:8px;height:316px;background:#7f7f7f;border-radius:4px"></div>
<div class="abs" style="left:280px;top:736px;width:634px;height:8px;background:#7f7f7f;border-radius:4px"></div>
<div class="abs" style="left:1099.2px;top:732px;width:54.6px;height:15.8px;background:#ececec"></div>
<span class="t" style="left:1119.20px;top:733.18px;font-size:13.2px;height:15.84px;line-height:15.84px;color:#111;-webkit-text-stroke:0.2px;transform:scaleX(0.9119);">1 &lt; 10</span>
<svg class="abs" style="left:72px;top:108px" width="1083" height="642" viewBox="72 108 1083 642"><defs><clipPath id="cv"><rect x="95" y="155" width="1044" height="577"/></clipPath><clipPath id="hr"><rect x="95" y="131.6" width="1044" height="24"/></clipPath><radialGradient id="ring"><stop offset="0.72" stop-color="#566a7e" stop-opacity="0"/><stop offset="0.77" stop-color="#566a7e" stop-opacity="0.52"/><stop offset="0.86" stop-color="#5e7286" stop-opacity="0.64"/><stop offset="0.95" stop-color="#566a7e" stop-opacity="0.48"/><stop offset="1" stop-color="#566a7e" stop-opacity="0"/></radialGradient></defs><rect x="95" y="155" width="1044" height="577" fill="#000"/><g clip-path="url(#cv)"><path d="M116.45 155V732M216.55 155V732M316.65 155V732M416.75 155V732M516.85 155V732M616.95 155V732M717.05 155V732M817.15 155V732M917.25 155V732M1017.35 155V732M1117.45 155V732M95 643.50H1139M95 543.50H1139M95 443.50H1139M95 343.50H1139M95 243.50H1139" stroke="#1b1b1b" stroke-width="1" fill="none"/><path d="M95.93 723.50H1140M95.93 713.50H1140M95.93 703.50H1140M95.93 693.50H1140M95.93 683.50H1140M95.93 673.50H1140M95.93 663.50H1140M95.93 653.50H1140M95.93 643.50H1140M95.93 633.50H1140M95.93 623.50H1140M95.93 613.50H1140M95.93 603.50H1140M95.93 593.50H1140M95.93 583.50H1140M95.93 573.50H1140M95.93 563.50H1140M95.93 553.50H1140M95.93 543.50H1140M95.93 533.50H1140M95.93 523.50H1140M95.93 513.50H1140M95.93 503.50H1140M95.93 493.50H1140M95.93 483.50H1140M95.93 473.50H1140M95.93 463.50H1140M95.93 453.50H1140M95.93 443.50H1140M95.93 433.50H1140M95.93 423.50H1140M95.93 413.50H1140M95.93 403.50H1140M95.93 393.50H1140M95.93 383.50H1140M95.93 373.50H1140M95.93 363.50H1140M95.93 353.50H1140M95.93 343.50H1140M95.93 333.50H1140M95.93 323.50H1140M95.93 313.50H1140M95.93 303.50H1140M95.93 293.50H1140M95.93 283.50H1140M95.93 273.50H1140M95.93 263.50H1140M95.93 253.50H1140M95.93 243.50H1140M95.93 233.50H1140M95.93 223.50H1140M95.93 213.50H1140M95.93 203.50H1140M95.93 193.50H1140M95.93 183.50H1140M95.93 173.50H1140M95.93 163.50H1140" stroke="#353535" stroke-width="1" stroke-dasharray="1 9.010" fill="none"/><path d="M95 543.30H136.47M116.45 523.50V563.50" stroke="#9a0000" stroke-width="1" fill="none"/><path d="M95 383.50H1139" stroke="#a67c08" stroke-width="0.9" stroke-dasharray="4.4 1.6" fill="none"/><path d="M987.62 155V732" stroke="#a67c08" stroke-width="0.7" stroke-dasharray="4.4 1.6" fill="none"/><path d="M196.53 443.50L1037.37 443.50" stroke="#ff0000" stroke-width="1" stroke-dasharray="17.5 7.25 1 7.25" stroke-dashoffset="0.83" fill="none"/><path d="M316.65 323.50L316.65 563.50" stroke="#ff0000" stroke-width="1" stroke-dasharray="17.5 7.25 1 7.25" stroke-dashoffset="4.25" fill="none"/><path d="M917.25 323.50L917.25 563.50" stroke="#ff0000" stroke-width="1" stroke-dasharray="17.5 7.25 1 7.25" stroke-dashoffset="4.25" fill="none"/><circle cx="316.65" cy="443.50" r="39.84" fill="none" stroke="#fff" stroke-width="2.9"/><circle cx="917.25" cy="443.50" r="39.84" fill="none" stroke="#fff" stroke-width="2.9"/><text transform="translate(427.6 534.3) rotate(-90) scale(0.910 1)" font-family="Liberation Sans, sans-serif" font-size="30.8" fill="#fff">104.245.02.4B</text><path d="M216.55 343.50H1017.35V543.50H216.55Z" stroke="#803e3e" stroke-width="2.35" fill="none" stroke-opacity="0.95"/><path d="M216.55 343.50L987.32 383.50L1017.35 543.50" stroke="#803e3e" stroke-width="1.8" fill="none" stroke-opacity="0.9"/><rect x="211.55" y="338.50" width="10" height="10" fill="#bf001e" stroke="#b9a9b0" stroke-width="0.8"/><rect x="1012.35" y="538.50" width="10" height="10" fill="#bf001e" stroke="#b9a9b0" stroke-width="0.8"/><rect x="211.55" y="538.50" width="10" height="10" fill="#0000aa" stroke="#b9a9b0" stroke-width="0.8"/><rect x="1012.35" y="338.50" width="10" height="10" fill="#0000aa" stroke="#b9a9b0" stroke-width="0.8"/><circle cx="1017.35" cy="343.50" r="5" fill="none" stroke="#d8002c" stroke-width="0.7"/><path d="M1012.35 343.50h10M1017.35 338.50v10" stroke="#d8002c" stroke-width="0.7"/><circle cx="989.9" cy="379.9" r="40.5" fill="url(#ring)"/><circle cx="987.62" cy="383.50" r="5.2" fill="none" stroke="#c08c0c" stroke-width="0.7"/><path d="M974.4 380H1005.3M990 364.7V395.4" stroke="#b6b6b6" stroke-width="3.9"/><circle cx="989.8" cy="380" r="1.5" fill="#000" stroke="#444" stroke-width="0.6"/><text x="995.5" y="401.3" font-family="Liberation Sans, sans-serif" font-size="13.6" fill="#f2c21c" textLength="31.6" lengthAdjust="spacingAndGlyphs">Rács</text></g><path d="M94.6 155V732M95 154.6H1139" stroke="#fff" stroke-width="0.8" fill="none"/><path d="M96.43 148V155M106.44 152V155M116.45 148V155M126.46 152V155M136.47 148V155M146.48 152V155M156.49 148V155M166.50 152V155M176.51 148V155M186.52 152V155M196.53 148V155M206.54 152V155M216.55 148V155M226.56 152V155M236.57 148V155M246.58 152V155M256.59 148V155M266.60 152V155M276.61 148V155M286.62 152V155M296.63 148V155M306.64 152V155M316.65 148V155M326.66 152V155M336.67 148V155M346.68 152V155M356.69 148V155M366.70 152V155M376.71 148V155M386.72 152V155M396.73 148V155M406.74 152V155M416.75 148V155M426.76 152V155M436.77 148V155M446.78 152V155M456.79 148V155M466.80 152V155M476.81 148V155M486.82 152V155M496.83 148V155M506.84 152V155M516.85 148V155M526.86 152V155M536.87 148V155M546.88 152V155M556.89 148V155M566.90 152V155M576.91 148V155M586.92 152V155M596.93 148V155M606.94 152V155M616.95 148V155M626.96 152V155M636.97 148V155M646.98 152V155M656.99 148V155M667.00 152V155M677.01 148V155M687.02 152V155M697.03 148V155M707.04 152V155M717.05 148V155M727.06 152V155M737.07 148V155M747.08 152V155M757.09 148V155M767.10 152V155M777.11 148V155M787.12 152V155M797.13 148V155M807.14 152V155M817.15 148V155M827.16 152V155M837.17 148V155M847.18 152V155M857.19 148V155M867.20 152V155M877.21 148V155M887.22 152V155M897.23 148V155M907.24 152V155M917.25 148V155M927.26 152V155M937.27 148V155M947.28 152V155M957.29 148V155M967.30 152V155M977.31 148V155M987.32 152V155M997.33 148V155M1007.34 152V155M1017.35 148V155M1027.36 152V155M1037.37 148V155M1047.38 152V155M1057.39 148V155M1067.40 152V155M1077.41 148V155M1087.42 152V155M1097.43 148V155M1107.44 152V155M1117.45 148V155M1127.46 152V155M1137.47 148V155" stroke="#4e4e4e" stroke-width="1.1" fill="none"/><path d="M87.8 723.50H95M92.2 713.50H95M87.8 703.50H95M92.2 693.50H95M87.8 683.50H95M92.2 673.50H95M87.8 663.50H95M92.2 653.50H95M87.8 643.50H95M92.2 633.50H95M87.8 623.50H95M92.2 613.50H95M87.8 603.50H95M92.2 593.50H95M87.8 583.50H95M92.2 573.50H95M87.8 563.50H95M92.2 553.50H95M87.8 543.50H95M92.2 533.50H95M87.8 523.50H95M92.2 513.50H95M87.8 503.50H95M92.2 493.50H95M87.8 483.50H95M92.2 473.50H95M87.8 463.50H95M92.2 453.50H95M87.8 443.50H95M92.2 433.50H95M87.8 423.50H95M92.2 413.50H95M87.8 403.50H95M92.2 393.50H95M87.8 383.50H95M92.2 373.50H95M87.8 363.50H95M92.2 353.50H95M87.8 343.50H95M92.2 333.50H95M87.8 323.50H95M92.2 313.50H95M87.8 303.50H95M92.2 293.50H95M87.8 283.50H95M92.2 273.50H95M87.8 263.50H95M92.2 253.50H95M87.8 243.50H95M92.2 233.50H95M87.8 223.50H95M92.2 213.50H95M87.8 203.50H95M92.2 193.50H95M87.8 183.50H95M92.2 173.50H95M87.8 163.50H95" stroke="#4e4e4e" stroke-width="1.1" fill="none"/><g clip-path="url(#hr)" font-family="Liberation Sans, sans-serif" font-size="9.4" fill="#1a1a1a" stroke="#1a1a1a" stroke-width="0.25" text-anchor="middle"><text x="96.43" y="140.8">-2</text><text x="116.45" y="140.8">0</text><text x="136.47" y="140.8">2</text><text x="156.49" y="140.8">4</text><text x="176.51" y="140.8">6</text><text x="196.53" y="140.8">8</text><text x="216.55" y="140.8">10</text><text x="236.57" y="140.8">12</text><text x="256.59" y="140.8">14</text><text x="276.61" y="140.8">16</text><text x="296.63" y="140.8">18</text><text x="316.65" y="140.8">20</text><text x="336.67" y="140.8">22</text><text x="356.69" y="140.8">24</text><text x="376.71" y="140.8">26</text><text x="396.73" y="140.8">28</text><text x="416.75" y="140.8">30</text><text x="436.77" y="140.8">32</text><text x="456.79" y="140.8">34</text><text x="476.81" y="140.8">36</text><text x="496.83" y="140.8">38</text><text x="516.85" y="140.8">40</text><text x="536.87" y="140.8">42</text><text x="556.89" y="140.8">44</text><text x="576.91" y="140.8">46</text><text x="596.93" y="140.8">48</text><text x="616.95" y="140.8">50</text><text x="636.97" y="140.8">52</text><text x="656.99" y="140.8">54</text><text x="677.01" y="140.8">56</text><text x="697.03" y="140.8">58</text><text x="717.05" y="140.8">60</text><text x="737.07" y="140.8">62</text><text x="757.09" y="140.8">64</text><text x="777.11" y="140.8">66</text><text x="797.13" y="140.8">68</text><text x="817.15" y="140.8">70</text><text x="837.17" y="140.8">72</text><text x="857.19" y="140.8">74</text><text x="877.21" y="140.8">76</text><text x="897.23" y="140.8">78</text><text x="917.25" y="140.8">80</text><text x="937.27" y="140.8">82</text><text x="957.29" y="140.8">84</text><text x="977.31" y="140.8">86</text><text x="997.33" y="140.8">88</text><text x="1017.35" y="140.8">90</text><text x="1037.37" y="140.8">92</text><text x="1057.39" y="140.8">94</text><text x="1077.41" y="140.8">96</text><text x="1097.43" y="140.8">98</text><text x="1117.45" y="140.8">100</text><text x="1137.47" y="140.8">102</text></g><g font-family="Liberation Sans, sans-serif" font-size="9.8" fill="#1a1a1a" stroke="#1a1a1a" stroke-width="0.2" text-anchor="middle" letter-spacing="-0.7"><text transform="translate(81.3 723.00) rotate(-90)">-18</text><text transform="translate(81.3 703.00) rotate(-90)">-16</text><text transform="translate(81.3 683.00) rotate(-90)">-14</text><text transform="translate(81.3 663.00) rotate(-90)">-12</text><text transform="translate(81.3 643.00) rotate(-90)">-10</text><text transform="translate(81.3 623.00) rotate(-90)">-8</text><text transform="translate(81.3 603.00) rotate(-90)">-6</text><text transform="translate(81.3 583.00) rotate(-90)">-4</text><text transform="translate(81.3 563.00) rotate(-90)">-2</text><text transform="translate(81.3 543.00) rotate(-90)">0</text><text transform="translate(81.3 523.00) rotate(-90)">2</text><text transform="translate(81.3 503.00) rotate(-90)">4</text><text transform="translate(81.3 483.00) rotate(-90)">6</text><text transform="translate(81.3 463.00) rotate(-90)">8</text><text transform="translate(81.3 443.00) rotate(-90)">10</text><text transform="translate(81.3 423.00) rotate(-90)">12</text><text transform="translate(81.3 403.00) rotate(-90)">14</text><text transform="translate(81.3 383.00) rotate(-90)">16</text><text transform="translate(81.3 363.00) rotate(-90)">18</text><text transform="translate(81.3 343.00) rotate(-90)">20</text><text transform="translate(81.3 323.00) rotate(-90)">22</text><text transform="translate(81.3 303.00) rotate(-90)">24</text><text transform="translate(81.3 283.00) rotate(-90)">26</text><text transform="translate(81.3 263.00) rotate(-90)">28</text><text transform="translate(81.3 243.00) rotate(-90)">30</text><text transform="translate(81.3 223.00) rotate(-90)">32</text><text transform="translate(81.3 203.00) rotate(-90)">34</text><text transform="translate(81.3 183.00) rotate(-90)">36</text><text transform="translate(81.3 163.00) rotate(-90)">38</text></g><path d="M981.9 145H993.3L987.6 151Z" fill="#000"/><path d="M85.4 378.3V388.5L91.2 383.4Z" fill="#000"/><circle cx="102.1" cy="118.7" r="5.5" fill="#f1f3f8" stroke="#2b3b86" stroke-width="1.7"/><path d="M98.4 118.7H105.8M102.1 115V122.4" stroke="#c9cfe0" stroke-width="0.6"/><path d="M100.2 120.2h2.4M102.8 116.2l1.2 2" stroke="#e07070" stroke-width="0.5"/><path d="M102.4 119 L107 123.8" stroke="#f0a020" stroke-width="1.7"/><path d="M106.6 123.4 L108 124.9" stroke="#e58a8a" stroke-width="1.7"/></svg>
<div class="abs" style="left:1155.2px;top:108px;width:299.4px;height:22.6px;background:linear-gradient(#ebebeb,#e3e3e3 50%,#d6d6d6)"></div>
<div class="abs" style="left:1155.2px;top:129.4px;width:299.4px;height:1.3px;background:#b4b4b4"></div>
<span class="t" style="left:1296.20px;top:112.22px;font-size:11.8px;height:14.16px;line-height:14.16px;color:#262626;transform:scaleX(0.9929);">Réteglista</span>
<div class="abs" style="left:1155.2px;top:156px;width:299.6px;height:642px;background:#fff;border-left:1px solid #c4c4c4;border-right:1px solid #c9c9c9"></div>
<div class="abs" id="rightbar"></div>
<span class="t" style="left:1183.20px;top:159.38px;font-size:13.7px;height:16.44px;line-height:16.44px;color:#151515;-webkit-text-stroke:0.2px;transform:scaleX(1.0106);">0</span>
<span class="t" style="left:1183.00px;top:179.38px;font-size:13.7px;height:16.44px;line-height:16.44px;color:#151515;-webkit-text-stroke:0.2px;transform:scaleX(0.9827);">Központ</span>
<span class="t" style="left:1183.00px;top:199.38px;font-size:13.7px;height:16.44px;line-height:16.44px;color:#151515;-webkit-text-stroke:0.2px;transform:scaleX(0.9823);">Látható</span>
<span class="t" style="left:1183.00px;top:219.38px;font-size:13.7px;height:16.44px;line-height:16.44px;color:#151515;-webkit-text-stroke:0.2px;transform:scaleX(0.9976);">Rejtett</span>
<svg class="abs" style="left:1154px;top:108px" width="346" height="400" viewBox="1154 108 346 400"><defs><linearGradient id="gB2" x1="0" y1="0" x2="0" y2="1"><stop offset="0" stop-color="#e9e9e9"/><stop offset="0.5" stop-color="#f7f7f7"/><stop offset="1" stop-color="#e9e9e9"/></linearGradient></defs><circle cx="1163.9" cy="117.9" r="6.9" fill="#6c6c6c"/><path d="M1160.9 114.9 L1166.9 120.9 M1166.9 114.9 L1160.9 120.9" stroke="#f2f2f2" stroke-width="1.7" stroke-linecap="round"/><circle cx="1182" cy="117.9" r="6.9" fill="#6c6c6c"/><rect x="1180.6" y="114.6" width="5.2" height="4.4" rx="0.8" fill="none" stroke="#f2f2f2" stroke-width="1"/><rect x="1178.2" y="117" width="5.2" height="4.2" rx="0.8" fill="#6c6c6c" stroke="#f2f2f2" stroke-width="1"/><rect x="1155.5" y="130.5" width="59" height="25" fill="url(#gB2)" stroke="#a6a6a6" stroke-width="1"/><rect x="1156.5" y="131.5" width="57" height="23" fill="none" stroke="#f3f3f3" stroke-width="1"/><rect x="1215.5" y="130.5" width="59" height="25" fill="url(#gB2)" stroke="#a6a6a6" stroke-width="1"/><rect x="1216.5" y="131.5" width="57" height="23" fill="none" stroke="#f3f3f3" stroke-width="1"/><rect x="1275.5" y="130.5" width="59" height="25" fill="url(#gB2)" stroke="#a6a6a6" stroke-width="1"/><rect x="1276.5" y="131.5" width="57" height="23" fill="none" stroke="#f3f3f3" stroke-width="1"/><rect x="1335.5" y="130.5" width="59" height="25" fill="url(#gB2)" stroke="#a6a6a6" stroke-width="1"/><rect x="1336.5" y="131.5" width="57" height="23" fill="none" stroke="#f3f3f3" stroke-width="1"/><rect x="1395.5" y="130.5" width="59" height="25" fill="url(#gB2)" stroke="#a6a6a6" stroke-width="1"/><rect x="1396.5" y="131.5" width="57" height="23" fill="none" stroke="#f3f3f3" stroke-width="1"/><g transform="translate(1185.00 142.60) scale(1.000)"><path d="M-7.55 0.2 Q-3.8 -5.7 0.3 -5.4 Q4.8 -5.2 7.55 -0.2 Q4 5.5 0 5.3 Q-4.2 5.2 -7.55 0.2Z" fill="#000"/><path d="M-4.6 -1.3 Q-4.9 3.4 0 3.6 Q4.9 3.4 4.6 -1.3 L2.9 -2.2 Q3 1.7 -0.1 1.7 Q-3 1.7 -2.9 -2.2Z" fill="#fff"/><circle cx="-1" cy="-0.6" r="0.6" fill="#bbb"/></g><g transform="translate(1245.00 142.60) scale(1.000)"><path d="M-7.55 0.2 Q-3.8 -5.7 0.3 -5.4 Q4.8 -5.2 7.55 -0.2 Q4 5.5 0 5.3 Q-4.2 5.2 -7.55 0.2Z" fill="#a9a9a9"/><path d="M-4.6 -1.3 Q-4.9 3.4 0 3.6 Q4.9 3.4 4.6 -1.3 L2.9 -2.2 Q3 1.7 -0.1 1.7 Q-3 1.7 -2.9 -2.2Z" fill="#fff"/><circle cx="-1" cy="-0.6" r="0.6" fill="#bbb"/></g><path d="M1298.6 143 H1310.8 M1304.7 136.9 V149.1" stroke="#ee0000" stroke-width="3.5"/><path d="M1359 143 H1371" stroke="#ee0000" stroke-width="3.7"/><g transform="translate(1417.90 149.70) rotate(-42.73)"><path d="M0 0 L4.08 -1.70 V1.70Z" fill="#c9a26a"/><path d="M0 0 L1.70 -0.71 V0.71Z" fill="#5a3a1a"/><rect x="4.08" y="-1.70" width="11.78" height="3.40" fill="#e9a63a"/><rect x="4.08" y="0.59" width="11.78" height="1.10" fill="#b9761c"/><rect x="15.86" y="-1.70" width="3.74" height="3.40" rx="0.6" fill="#e8262c"/></g><rect x="1161.5" y="163.50" width="15" height="7.7" fill="#fff" stroke="#000" stroke-width="1"/><g transform="translate(1422.90 166.70) scale(0.960)"><path d="M-7.55 0.2 Q-3.8 -5.7 0.3 -5.4 Q4.8 -5.2 7.55 -0.2 Q4 5.5 0 5.3 Q-4.2 5.2 -7.55 0.2Z" fill="#000"/><path d="M-4.6 -1.3 Q-4.9 3.4 0 3.6 Q4.9 3.4 4.6 -1.3 L2.9 -2.2 Q3 1.7 -0.1 1.7 Q-3 1.7 -2.9 -2.2Z" fill="#fff"/><circle cx="-1" cy="-0.6" r="0.6" fill="#bbb"/></g><path d="M1441.70 166.40 V164.00 a3.3 3.6 0 0 1 6.6 0 V166.40" fill="none" stroke="#c2c2c2" stroke-width="1.5"/><rect x="1440.00" y="166.00" width="10" height="7.7" fill="#b3b3b3"/><rect x="1161.5" y="183.50" width="15" height="7.7" fill="#ff0000" stroke="#000" stroke-width="1"/><g transform="translate(1422.90 186.70) scale(0.960)"><path d="M-7.55 0.2 Q-3.8 -5.7 0.3 -5.4 Q4.8 -5.2 7.55 -0.2 Q4 5.5 0 5.3 Q-4.2 5.2 -7.55 0.2Z" fill="#000"/><path d="M-4.6 -1.3 Q-4.9 3.4 0 3.6 Q4.9 3.4 4.6 -1.3 L2.9 -2.2 Q3 1.7 -0.1 1.7 Q-3 1.7 -2.9 -2.2Z" fill="#fff"/><circle cx="-1" cy="-0.6" r="0.6" fill="#bbb"/></g><path d="M1441.70 186.40 V184.00 a3.3 3.6 0 0 1 6.6 0 V186.40" fill="none" stroke="#c2c2c2" stroke-width="1.5"/><rect x="1440.00" y="186.00" width="10" height="7.7" fill="#b3b3b3"/><rect x="1161.5" y="203.50" width="15" height="7.7" fill="#fff" stroke="#000" stroke-width="1"/><g transform="translate(1422.90 206.70) scale(0.960)"><path d="M-7.55 0.2 Q-3.8 -5.7 0.3 -5.4 Q4.8 -5.2 7.55 -0.2 Q4 5.5 0 5.3 Q-4.2 5.2 -7.55 0.2Z" fill="#000"/><path d="M-4.6 -1.3 Q-4.9 3.4 0 3.6 Q4.9 3.4 4.6 -1.3 L2.9 -2.2 Q3 1.7 -0.1 1.7 Q-3 1.7 -2.9 -2.2Z" fill="#fff"/><circle cx="-1" cy="-0.6" r="0.6" fill="#bbb"/></g><path d="M1441.70 206.40 V204.00 a3.3 3.6 0 0 1 6.6 0 V206.40" fill="none" stroke="#c2c2c2" stroke-width="1.5"/><rect x="1440.00" y="206.00" width="10" height="7.7" fill="#b3b3b3"/><rect x="1161.5" y="223.50" width="15" height="7.7" fill="#000" stroke="#000" stroke-width="1"/><g transform="translate(1422.90 226.70) scale(0.960)"><path d="M-7.55 0.2 Q-3.8 -5.7 0.3 -5.4 Q4.8 -5.2 7.55 -0.2 Q4 5.5 0 5.3 Q-4.2 5.2 -7.55 0.2Z" fill="#000"/><path d="M-4.6 -1.3 Q-4.9 3.4 0 3.6 Q4.9 3.4 4.6 -1.3 L2.9 -2.2 Q3 1.7 -0.1 1.7 Q-3 1.7 -2.9 -2.2Z" fill="#fff"/><circle cx="-1" cy="-0.6" r="0.6" fill="#bbb"/></g><path d="M1441.70 226.40 V224.00 a3.3 3.6 0 0 1 6.6 0 V226.40" fill="none" stroke="#c2c2c2" stroke-width="1.5"/><rect x="1440.00" y="226.00" width="10" height="7.7" fill="#b3b3b3"/><g transform="translate(1394.40 213.50) rotate(-43.26)"><path d="M0 0 L3.48 -1.45 V1.45Z" fill="#c9a26a"/><path d="M0 0 L1.45 -0.61 V0.61Z" fill="#5a3a1a"/><rect x="3.48" y="-1.45" width="12.01" height="2.90" fill="#e9a63a"/><rect x="3.48" y="0.51" width="12.01" height="0.94" fill="#b9761c"/><rect x="15.49" y="-1.45" width="3.19" height="2.90" rx="0.6" fill="#e8262c"/></g><rect x="1456.2" y="120.2" width="42.8" height="42.8" rx="4" fill="#b5b5b5"/><rect x="1456.2" y="417.2" width="42.8" height="42.8" rx="4" fill="#b5b5b5"/><rect x="1462.0" y="115.8" width="1.8" height="1.8" fill="#a4a4a4"/><rect x="1468.0" y="115.8" width="1.8" height="1.8" fill="#a4a4a4"/><rect x="1474.0" y="115.8" width="1.8" height="1.8" fill="#a4a4a4"/><rect x="1480.0" y="115.8" width="1.8" height="1.8" fill="#a4a4a4"/><rect x="1486.0" y="115.8" width="1.8" height="1.8" fill="#a4a4a4"/><path d="M1458 261.8 H1500" stroke="#6a6a6a" stroke-width="1" stroke-dasharray="1 2"/><path d="M1458 409.6 H1500" stroke="#6a6a6a" stroke-width="1" stroke-dasharray="1 2"/><rect x="1463.50" y="127.40" width="27.2" height="27.2" fill="#fff" stroke="#2b2b2b" stroke-width="0.8"/><rect x="1463.50" y="127.40" width="27.2" height="4.2" fill="#000"/><rect x="1464.20" y="128.10" width="3" height="3" fill="#fff"/><g transform="translate(1463.10 127.00)"><path d="M7.4 13.6 l8.4 -4 v9.6 l-8.4 4z" fill="#8e8e8e" stroke="#444" stroke-width="0.6"/><path d="M9.4 13.4 l8.4 -4 v9.6 l-8.4 4z" fill="#b4b4b4" stroke="#444" stroke-width="0.6"/><path d="M11.6 13.2 l8.6 -4 v9.6 l-8.6 4z" fill="#fff" stroke="#444" stroke-width="0.6"/><path d="M13.4 19.6 l4.6 -7.4 v5.4z" fill="none" stroke="#ff4050" stroke-width="0.8"/></g><rect x="1463.50" y="174.40" width="27.2" height="27.2" fill="#fff" stroke="#2b2b2b" stroke-width="0.8"/><rect x="1463.50" y="174.40" width="27.2" height="4.2" fill="#000"/><rect x="1464.20" y="175.10" width="3" height="3" fill="#fff"/><g transform="translate(1463.10 174.00)"><rect x="7" y="10.4" width="9.6" height="7.4" fill="#f3e6b0" stroke="#8a8a6a" stroke-width="0.7"/><circle cx="16" cy="18.6" r="4.4" fill="#f3e6b0" fill-opacity="0.7" stroke="#8a8a6a" stroke-width="0.7"/></g><rect x="1463.50" y="220.60" width="27.2" height="27.2" fill="#fff" stroke="#2b2b2b" stroke-width="0.8"/><rect x="1463.50" y="220.60" width="27.2" height="4.2" fill="#000"/><rect x="1464.20" y="221.30" width="3" height="3" fill="#fff"/><g transform="translate(1463.10 220.20)"><rect x="6" y="10" width="16" height="11.4" rx="2" fill="#f0f0f0" stroke="#b9c6e6" stroke-width="0.9"/></g><rect x="1463.50" y="276.70" width="27.2" height="27.2" fill="#fff" stroke="#2b2b2b" stroke-width="0.8"/><rect x="1463.50" y="276.70" width="27.2" height="4.2" fill="#000"/><rect x="1464.20" y="277.40" width="3" height="3" fill="#fff"/><g transform="translate(1463.10 276.30)"><rect x="3.6" y="8.6" width="3.8" height="3.2" rx="0.6" fill="#000"/><rect x="10.2" y="8.8" width="13.6" height="2.8" fill="#fff" stroke="#333" stroke-width="0.6"/><rect x="3.6" y="14.6" width="3.8" height="3.2" rx="0.6" fill="#000"/><rect x="10.2" y="14.8" width="13.6" height="2.8" fill="#fff" stroke="#333" stroke-width="0.6"/><rect x="3.6" y="20.6" width="3.8" height="3.2" rx="0.6" fill="#000"/><rect x="10.2" y="20.8" width="13.6" height="2.8" fill="#fff" stroke="#333" stroke-width="0.6"/></g><rect x="1463.50" y="322.60" width="27.2" height="27.2" fill="#fff" stroke="#2b2b2b" stroke-width="0.8"/><rect x="1463.50" y="322.60" width="27.2" height="4.2" fill="#000"/><rect x="1464.20" y="323.30" width="3" height="3" fill="#fff"/><g transform="translate(1463.10 322.20)"><path d="M6.4 9.6 h15 l-5.6 6.8 v6.6 l-3.2 -1.6 v-5z" fill="#a9a9a9" stroke="#555" stroke-width="0.7"/><ellipse cx="13.9" cy="9.6" rx="7.5" ry="1.4" fill="#d0d0d0" stroke="#555" stroke-width="0.6"/></g><rect x="1463.50" y="368.60" width="27.2" height="27.2" fill="#fff" stroke="#2b2b2b" stroke-width="0.8"/><rect x="1463.50" y="368.60" width="27.2" height="4.2" fill="#000"/><rect x="1464.20" y="369.30" width="3" height="3" fill="#fff"/><g transform="translate(1463.10 368.20)"><path d="M6.4 9.4 l4.6 2.6 v8.4 l-4.6 2.6z" fill="#fff" stroke="#444" stroke-width="0.7"/><rect x="11" y="12.4" width="10.4" height="7.6" rx="1" fill="#8c8c8c" stroke="#555" stroke-width="0.5"/><path d="M4 16.2 h20" stroke="#f0a0a0" stroke-width="0.6" stroke-dasharray="2 1"/></g><rect x="1463.50" y="424.20" width="27.2" height="27.2" fill="#fff" stroke="#2b2b2b" stroke-width="0.8"/><rect x="1463.50" y="424.20" width="27.2" height="4.2" fill="#000"/><rect x="1464.20" y="424.90" width="3" height="3" fill="#fff"/><g transform="translate(1463.10 423.80)"><g stroke="#777" stroke-width="0.6"><path d="M2.6 8.6 h13"/><path d="M2.6 12.0 h16"/><path d="M2.6 15.4 h13"/><path d="M2.6 18.8 h16"/></g><rect x="0.8" y="22.4" width="26.4" height="4.6" fill="#fff" stroke="#222" stroke-width="0.6"/><path d="M3 25 h2 M9.6 25 h14" stroke="#333" stroke-width="1.2"/></g><rect x="1463.50" y="471.60" width="27.2" height="27.2" fill="#fff" stroke="#2b2b2b" stroke-width="0.8"/><rect x="1463.50" y="471.60" width="27.2" height="4.2" fill="#000"/><rect x="1464.20" y="472.30" width="3" height="3" fill="#fff"/><g transform="translate(1463.10 471.20)"><rect x="7.6" y="9" width="12.6" height="14.6" rx="1" fill="#c98a30" stroke="#a46a1c" stroke-width="0.5"/><rect x="9" y="10.6" width="9.8" height="11.6" fill="#f2f2f2"/><rect x="11.2" y="7.8" width="5.4" height="2.6" fill="#9c9c90"/><path d="M10.4 13.6 h7 M10.4 15.8 h7 M10.4 18 h5" stroke="#c4c4c4" stroke-width="0.8"/></g></svg>
<div class="abs" style="left:72.6px;top:747.6px;width:1081.6px;height:2.4px;background:linear-gradient(#d4d4d4,#b4b4b4)"></div>
<div class="abs" style="left:72.6px;top:750px;width:1081.6px;height:20.2px;background:#fff"></div>
<div class="abs" style="left:1138.4px;top:750px;width:15px;height:20.2px;background:#fafafa;border-left:1px solid #ededed"></div>
<div class="abs" style="left:1142px;top:749.8px;width:8px;height:17.2px;background:#7f7f7f;border-radius:4px"></div>
<div class="abs" style="left:72.6px;top:770.2px;width:1081.6px;height:1.2px;background:#bcbcbc"></div>
<div class="abs" style="left:72.6px;top:771.4px;width:1081.6px;height:26.6px;background:#ececec"></div>
<div class="abs" style="left:233.9px;top:775.4px;width:893.2px;height:19.2px;background:#fff"></div>
<span class="t" style="left:77.00px;top:750.08px;font-size:13.2px;height:15.84px;line-height:15.84px;color:#1212dd;font-style:italic;-webkit-text-stroke:0.2px;transform:scaleX(0.9752);">Parancs:</span>
<span class="t" style="left:132.80px;top:750.08px;font-size:13.2px;height:15.84px;line-height:15.84px;color:#1212dd;-webkit-text-stroke:0.2px;transform:scaleX(0.9581);">new</span>
<span class="t" style="left:72.90px;top:777.68px;font-size:13.2px;height:15.84px;line-height:15.84px;color:#111;-webkit-text-stroke:0.2px;letter-spacing:0.146px;">A referenciapont célpontja:</span>
<div class="abs" style="left:70.4px;top:747.6px;width:2.2px;height:50.4px;background:linear-gradient(90deg,#c9c9c9,#a9a9a9)"></div>
<div class="abs" style="left:1152.9px;top:747.6px;width:2.8px;height:50.4px;background:linear-gradient(90deg,#cdcdcd,#a9a9a9)"></div>
<div class="abs" id="status"></div>
<span class="t" style="left:2.20px;top:806.74px;font-size:9.6px;height:11.52px;line-height:11.52px;color:#151515;transform:scaleX(0.9616);">87,16</span>
<span class="t" style="left:2.20px;top:827.04px;font-size:9.6px;height:11.52px;line-height:11.52px;color:#151515;letter-spacing:0.403px;">@-3,-4</span>
<div class="abs" style="left:253.2px;top:802.4px;width:1px;height:41.6px;background:#f4f4f4"></div>
<div class="abs" style="left:254.1px;top:802.4px;width:1px;height:41.6px;background:#7e7e7e"></div>
<span class="t" style="left:256.30px;top:806.74px;font-size:9.6px;height:11.52px;line-height:11.52px;color:#151515;letter-spacing:0.369px;">88.459&lt;10°</span>
<span class="t" style="left:256.30px;top:827.04px;font-size:9.6px;height:11.52px;line-height:11.52px;color:#151515;letter-spacing:0.209px;">@5&lt;233°</span>
<span class="t" style="left:579.10px;top:816.54px;font-size:9.6px;height:11.52px;line-height:11.52px;color:#111;letter-spacing:0.312px;">A referenciapont célpontja</span>
<span class="t" style="left:949.10px;top:811.24px;font-size:9.6px;height:11.52px;line-height:11.52px;color:#111;letter-spacing:0.328px;">Kiválasztott szervezetek:</span>
<span class="t" style="left:949.10px;top:822.64px;font-size:9.6px;height:11.52px;line-height:11.52px;color:#111;letter-spacing:0.325px;">4 Vonalak a "Látható" rétegen 4 Vonalak".</span>
<svg class="abs" style="left:0;top:770px" width="1500" height="74" viewBox="0 770 1500 74"><circle cx="509.4" cy="822" r="3" fill="#c9c9c9"/><circle cx="943.3" cy="822" r="3" fill="#c9c9c9"/><circle cx="1272.2" cy="822" r="3" fill="#c9c9c9"/><rect x="717.6" y="806" width="17" height="29.6" rx="8.5" fill="#fff" stroke="#333" stroke-width="0.8"/><path d="M717.6 819.6 Q726.1 817.6 734.6 819.6 M726.1 806 V818.4" stroke="#333" stroke-width="0.8" fill="none"/><ellipse cx="726.1" cy="812" rx="1.5" ry="3.1" fill="#fff" stroke="#333" stroke-width="0.8"/><defs><linearGradient id="gB3" x1="0" y1="0" x2="0" y2="1"><stop offset="0" stop-color="#e6e6e6"/><stop offset="0.5" stop-color="#f6f6f6"/><stop offset="1" stop-color="#ececec"/></linearGradient></defs><rect x="1127.8" y="772.9" width="24.4" height="24.3" fill="url(#gB3)" stroke="#9c9c9c" stroke-width="1"/><rect x="1133.5" y="780.6" width="13" height="8.8" fill="#efefef" stroke="#333" stroke-width="0.8"/><rect x="1133.1" y="780.2" width="13.8" height="2.9" fill="#000"/><circle cx="1143.6" cy="781.5" r="0.6" fill="#999"/></svg>
</div></body></html>
